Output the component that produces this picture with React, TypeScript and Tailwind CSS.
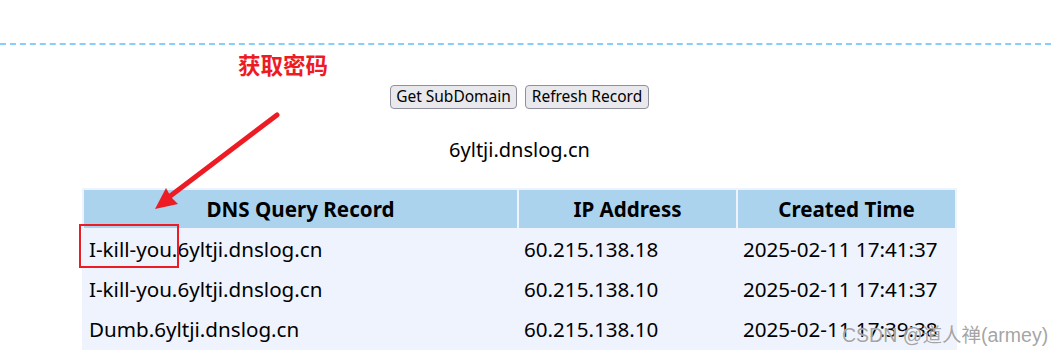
import React from "react";

const rows = [
  ["I-kill-you.6yltji.dnslog.cn", "60.215.138.18", "2025-02-11 17:41:37"],
  ["I-kill-you.6yltji.dnslog.cn", "60.215.138.10", "2025-02-11 17:41:37"],
  ["Dumb.6yltji.dnslog.cn", "60.215.138.10", "2025-02-11 17:39:38"],
];

export default function App() {
  return (
    <div
      className="relative w-[1051px] h-[354px] overflow-hidden bg-white text-black"
      style={{ fontFamily: '"Noto Sans", "Noto Sans CJK SC", sans-serif' }}
    >
      <div className="pt-[43px]">
        <div className="border-t-2 border-dashed border-[#87cefa]" />
      </div>
      <div className="w-[1039px] flex flex-col items-center">
        <div className="mt-[40px] flex gap-2">
          <button className="h-[24px] w-[127px] px-0 text-[15.5px] leading-none bg-[#e9e9ed] border border-[#8f8f9d] rounded-[4px]">
            Get SubDomain
          </button>
          <button className="h-[24px] w-[124px] px-0 text-[15.5px] leading-none bg-[#e9e9ed] border border-[#8f8f9d] rounded-[4px]">
            Refresh Record
          </button>
        </div>
        <div className="mt-[27px] text-[20px] leading-[28px]">6yltji.dnslog.cn</div>
        <table className="mt-[24px] w-[875px] table-fixed border-separate border-spacing-[2px] bg-[#eef3fd] text-[20.6px]">
          <colgroup>
            <col className="w-[433px]" />
            <col className="w-[217px]" />
            <col className="w-[217px]" />
          </colgroup>
          <thead>
            <tr className="h-[38px]">
              <th className="bg-[#acd3ee] font-bold text-center p-0">DNS Query Record</th>
              <th className="bg-[#acd3ee] font-bold text-center p-0">IP Address</th>
              <th className="bg-[#acd3ee] font-bold text-center p-0">Created Time</th>
            </tr>
          </thead>
          <tbody>
            {rows.map((r, i) => (
              <tr key={i} className="h-[38px]">
                {r.map((c, j) => (
                  <td key={j} className="px-[5px] py-0 whitespace-nowrap">
                    {c}
                  </td>
                ))}
              </tr>
            ))}
          </tbody>
        </table>
      </div>

      {/* annotation text */}
      <div className="absolute left-[238px] top-[51px] text-[22.5px] leading-[30px] font-bold text-[#ed1c24]">
        获取密码
      </div>

      {/* arrow */}
      <svg className="absolute left-0 top-0 pointer-events-none" width="1051" height="354">
        <line x1="277" y1="115" x2="165" y2="200" stroke="#ed1c24" strokeWidth="5" strokeLinecap="round" />
        <polygon points="155,209 166,188 171,197 178,204" fill="#ed1c24" />
      </svg>

      {/* red box */}
      <div className="absolute left-[79px] top-[224px] w-[100px] h-[44px] border-2 border-[#ed1c24]" />

      {/* watermark */}
      <div
        className="absolute left-[842px] top-[321px] text-[19.5px] leading-[28px] text-[#8c8c8c]/80 whitespace-nowrap"
        style={{ fontFamily: '"Liberation Sans", "Noto Sans CJK SC", sans-serif', textShadow: "0 0 1px #fff" }}
      >
        CSDN @道人禅(armey)
      </div>
    </div>
  );
}
